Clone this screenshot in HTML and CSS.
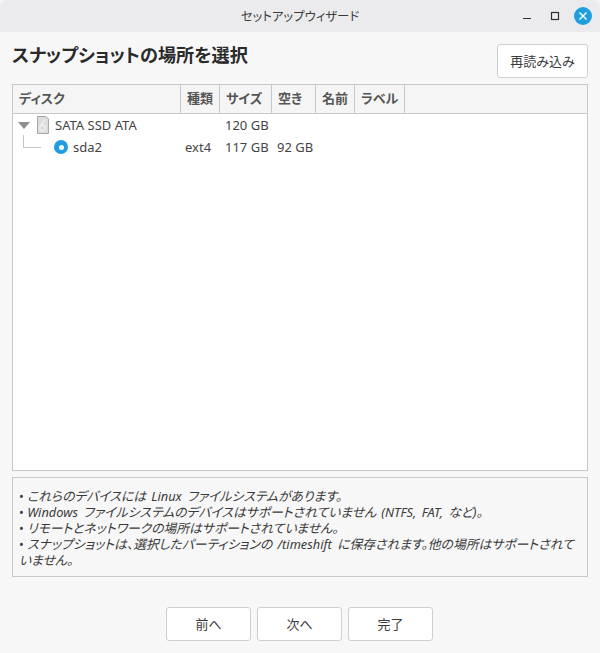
FILE: index.html
```html
<!DOCTYPE html>
<html lang="ja">
<head>
<meta charset="utf-8">
<title>セットアップウィザード</title>
<link rel="stylesheet" href="styles.css">
</head>
<body>
<div class="window">
  <header class="titlebar">
    <span class="title">セットアップウィザード</span>
    <div class="controls">
      <svg class="ctl ctl-min" width="16" height="16" viewBox="0 0 16 16"><path d="M4 10.5h8" stroke="#2e2e2e" stroke-width="1.2" fill="none"/></svg>
      <svg class="ctl" width="16" height="16" viewBox="0 0 16 16"><rect x="4.5" y="4.5" width="7" height="7" stroke="#2e2e2e" stroke-width="1.2" fill="none"/></svg>
      <svg class="ctl" width="18" height="18" viewBox="0 0 18 18"><circle cx="9" cy="9" r="9" fill="#1f9ede"/><path d="M5.5 5.5l7 7M12.5 5.5l-7 7" stroke="#fff" stroke-width="1.4" fill="none"/></svg>
    </div>
  </header>
  <main class="content">
    <div class="heading-row">
      <h1 class="heading">スナップショットの場所を選択</h1>
      <button class="btn btn-reload">再読み込み</button>
    </div>
    <section class="table">
      <div class="thead">
        <div class="th c-disk">ディスク</div>
        <div class="th c-type">種類</div>
        <div class="th c-size">サイズ</div>
        <div class="th c-free">空き</div>
        <div class="th c-name">名前</div>
        <div class="th c-label">ラベル</div>
        <div class="th-fill"></div>
      </div>
      <div class="tbody">
        <div class="row">
          <div class="td c-disk disk-cell">
            <svg class="arrow" width="12" height="7" viewBox="0 0 12 7"><path d="M0 0h12L6 7z" fill="#8f8f8f"/></svg>
            <svg class="drive" width="12" height="18" viewBox="0 0 12 18"><path d="M.5.5h8.5l2.5 2.5v14.5H.5z" fill="#dcdcdc" stroke="#a8a8a8"/><circle cx="5.5" cy="12" r="2.8" fill="none" stroke="#f4f4f4" stroke-width="1.2"/><path d="M3.5 10L8 3.5" stroke="#f4f4f4" stroke-width="1.2"/></svg>
            <span>SATA SSD ATA</span>
          </div>
          <div class="td c-type"></div>
          <div class="td c-size">120 GB</div>
          <div class="td c-free"></div>
        </div>
        <div class="row">
          <div class="td c-disk part-cell">
            <span class="branch"></span>
            <span class="radio"></span>
            <span>sda2</span>
          </div>
          <div class="td c-type">ext4</div>
          <div class="td c-size">117 GB</div>
          <div class="td c-free">92 GB</div>
        </div>
      </div>
    </section>
    <section class="notes">
      <p>• <em>これらのデバイスには Linux ファイルシステムがあります。</em></p>
      <p>• <em>Windows ファイルシステムのデバイスはサポートされていません (NTFS, FAT, など)。</em></p>
      <p>• <em>リモートとネットワークの場所はサポートされていません。</em></p>
      <p>• <em>スナップショットは、選択したパーティションの /timeshift に保存されます。他の場所はサポートされていません。</em></p>
    </section>
    <footer class="actions">
      <button class="btn btn-nav">前へ</button>
      <button class="btn btn-nav">次へ</button>
      <button class="btn btn-nav">完了</button>
    </footer>
  </main>
</div>
</body>
</html>
```
FILE: styles.css
```css
* { box-sizing: border-box; }
html, body { margin: 0; height: 100%; background: #f4f4f4; }
body {
  font-family: "Noto Sans", "Noto Sans CJK JP", sans-serif;
  font-size: 13px;
  font-feature-settings: "palt";
  color: #3a3a3a;
}
.window {
  width: 600px;
  height: 653px;
  display: flex;
  flex-direction: column;
  background: #f7f7f7;
  border-radius: 7px 7px 0 0;
  overflow: hidden;
}
.titlebar {
  height: 32px;
  flex: none;
  background: #ebebed;
  position: relative;
  display: flex;
  align-items: center;
  justify-content: center;
}
.title { font-size: 12.4px; color: #3c3c3c; }
.controls {
  position: absolute;
  right: 8px;
  top: 7px;
  height: 18px;
  display: flex;
  align-items: center;
  gap: 11px;
}
.ctl { display: block; }
.ctl-min { margin-right: 1px; }
.content {
  flex: 1;
  display: flex;
  flex-direction: column;
  padding: 12px;
}
.heading-row {
  display: flex;
  justify-content: space-between;
  height: 34px;
  margin-bottom: 6px;
}
.heading {
  margin: 0;
  font-size: 18.15px;
  font-weight: 700;
  line-height: 22px;
  color: #2a2a2a;
}
.btn {
  font: inherit;
  font-feature-settings: inherit;
  color: #3a3a3a;
  background: #fff;
  border: 1px solid #cfcfd3;
  border-radius: 3px;
  padding: 0 0 2px;
  height: 34px;
}
.btn-reload { width: 91px; }
.table {
  height: 387px;
  flex: none;
  border: 1px solid #c8c8cc;
  background: #fff;
  display: flex;
  flex-direction: column;
}
.thead {
  height: 29px;
  flex: none;
  display: flex;
  background: #f5f5f5;
  border-bottom: 1px solid #c8c8cc;
}
.th {
  border-right: 1px solid #c8c8cc;
  font-weight: 700;
  color: #555;
  line-height: 27px;
  padding-left: 6px;
}
.th-fill { flex: 1; }
.c-disk { width: 168px; flex: none; }
.c-type { width: 39px; flex: none; }
.c-size { width: 52px; flex: none; }
.c-free { width: 44px; flex: none; }
.c-name { width: 39px; flex: none; }
.c-label { width: 50px; flex: none; }
.row {
  display: flex;
  height: 22px;
  align-items: center;
  color: #444;
}
.td { white-space: nowrap; padding-left: 4px; }
.td.c-size, .td.c-free { padding-left: 5px; }
.disk-cell, .part-cell { display: flex; align-items: center; }
.arrow { margin-right: 7px; margin-left: 1px; }
.drive { margin-right: 6px; }
.branch {
  width: 18px;
  height: 13px;
  margin: -12px 13px 0 6px;
  border-left: 1px solid #c4c4c4;
  border-bottom: 1px solid #c4c4c4;
}
.radio {
  width: 14px;
  height: 14px;
  margin-right: 5px;
  border-radius: 50%;
  background: #1f9ede;
  display: flex;
  align-items: center;
  justify-content: center;
}
.radio::after {
  content: "";
  width: 5px;
  height: 5px;
  border-radius: 50%;
  background: #fff;
}
.notes {
  height: 100px;
  flex: none;
  margin-top: 6px;
  border: 1px solid #c8c8cc;
  padding: 10px 6px 0;
  font-size: 12.8px;
  line-height: 16px;
  color: #3a3a3a;
}
.notes p { margin: 0; }
.notes em { word-spacing: 2px; }
.actions {
  display: flex;
  justify-content: center;
  gap: 6px;
  margin-top: 30px;
  padding-right: 1px;
}
.btn-nav { width: 85px; }
```
